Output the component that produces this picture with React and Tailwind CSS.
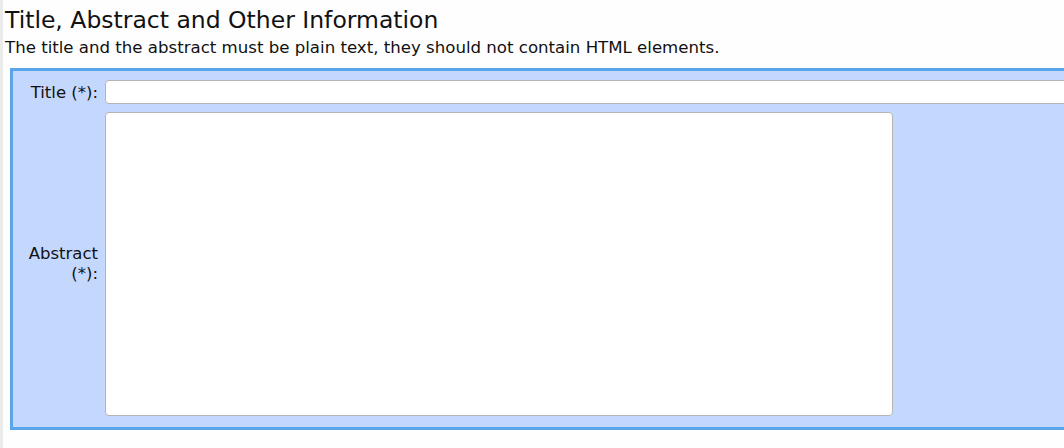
export default function App() {
  return (
    <div className="flex w-[1064px] h-[448px] overflow-hidden bg-[#fefefe] text-[#111]" style={{ fontFamily: '"DejaVu Sans", sans-serif' }}>
      <div className="w-[3px] shrink-0 bg-[#ebebeb]" />
      <div className="flex-1 pl-[2px]">
        <h1 className="text-[23.5px] leading-[30px] pt-[5px] font-normal">Title, Abstract and Other Information</h1>
        <p className="text-[16.6px] leading-[20px] mt-[3px]">The title and the abstract must be plain text, they should not contain HTML elements.</p>
        <div className="ml-[5px] mt-[10px] w-[1100px] border-[3px] border-[#5aa5ea] bg-[#c4d7fd] pt-[9px] pb-[11px] flex flex-col gap-[8px]">
          <div className="flex items-center">
            <label className="w-[85px] shrink-0 text-right text-[16.5px] leading-[20px] mt-[2px]">Title (*):</label>
            <input className="ml-[7px] flex-1 h-[24px] bg-white border border-[#b5b5b5] rounded-[4px] outline-none" />
          </div>
          <div className="flex items-center">
            <label className="w-[85px] shrink-0 text-right text-[16.5px] leading-[20px]">Abstract (*):</label>
            <textarea className="ml-[7px] w-[788px] h-[304px] bg-white border border-[#b5b5b5] rounded-[4px] outline-none resize-none" />
          </div>
        </div>
      </div>
    </div>
  );
}
